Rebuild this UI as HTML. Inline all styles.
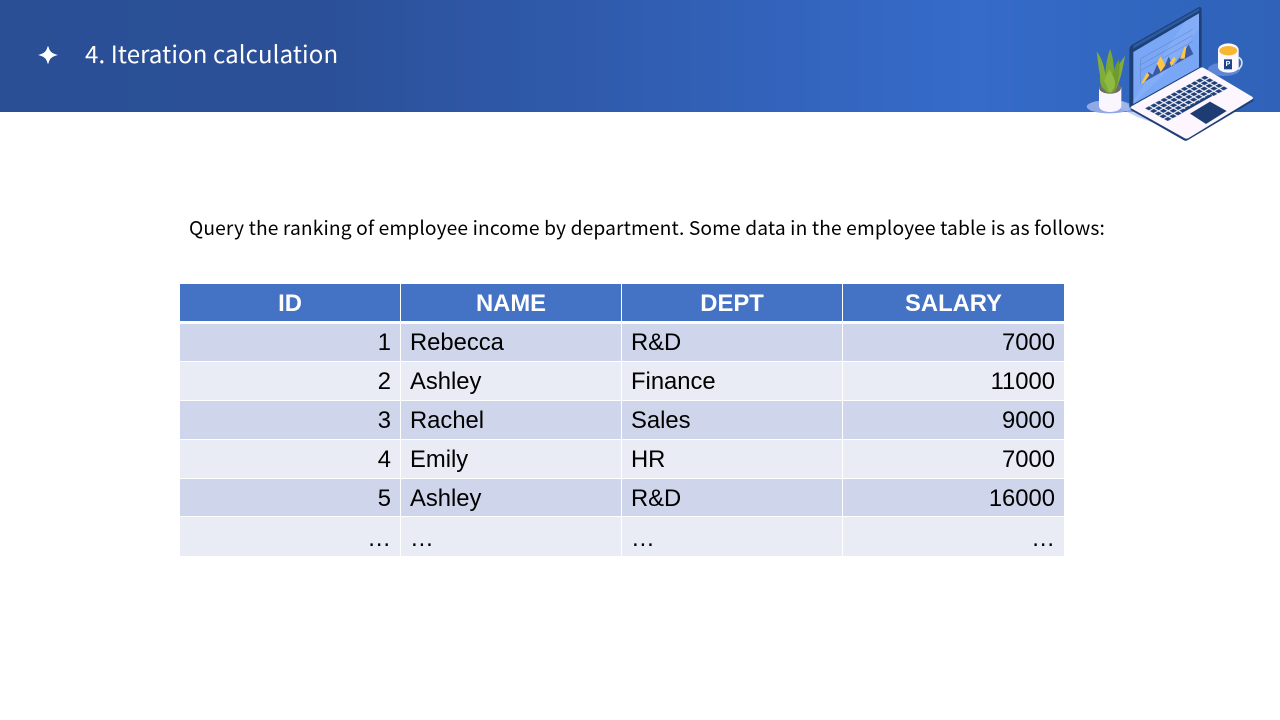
<!DOCTYPE html>
<html><head><meta charset="utf-8"><style>
html,body{margin:0;padding:0;background:#fff}
#p{position:relative;width:1280px;height:720px;overflow:hidden;background:#fff}
#h{position:absolute;left:0;top:0;width:1280px;height:112px;background:linear-gradient(90deg,#2a4f95 0,#2b5098 320px,#366bca 970px,#3268c2 1100px,#2f62b8 1280px)}
.y{font-family:"Noto Sans CJK SC","Liberation Sans",sans-serif;position:absolute;white-space:nowrap}
#t{left:85px;top:35px;font-size:24px;line-height:36px;color:#fff;letter-spacing:.12px}
#q{left:189px;top:213px;font-size:19.2px;line-height:28px;color:#000;letter-spacing:.13px}
.c{position:absolute;font-family:"Liberation Sans",sans-serif;font-size:23.8px;line-height:38px;color:#000;box-sizing:border-box;white-space:nowrap}
.r{position:absolute;left:180px;width:884px}
</style></head><body><div id="p">
<div id="h"></div>
<svg style="position:absolute;left:38px;top:45px" width="20" height="20" viewBox="0 0 20 20"><path d="M10 1.500C11 6 13 8.500 18.500 10C13 11.500 11 14 10 18.500C9 14 7 11.500 1.500 10C7 8.500 9 6 10 1.500Z" fill="#fff" stroke="#fff" stroke-width=".8"/></svg>
<div class="y" id="t">4. Iteration calculation</div>
<div class="y" id="q">Query the ranking of employee income by department. Some data in the employee table is as follows:</div>

<div class="r" style="top:284px;height:37px;background:#4472c4"></div>
<div class="r" style="top:324px;height:37px;background:#cfd5ea"></div>
<div class="r" style="top:362px;height:38px;background:#e9ebf5"></div>
<div class="r" style="top:401px;height:38px;background:#cfd5ea"></div>
<div class="r" style="top:440px;height:38px;background:#e9ebf5"></div>
<div class="r" style="top:479px;height:37px;background:#cfd5ea"></div>
<div class="r" style="top:517px;height:38.500px;background:#e9ebf5"></div>
<div style="position:absolute;left:400px;top:284px;width:1px;height:272px;background:#fff"></div>
<div style="position:absolute;left:621px;top:284px;width:1px;height:272px;background:#fff"></div>
<div style="position:absolute;left:842px;top:284px;width:1px;height:272px;background:#fff"></div>

<div class="c" style="left:180px;width:220px;top:285px;text-align:center;font-weight:bold;color:#fff">ID</div>
<div class="c" style="left:401px;width:220px;top:285px;text-align:center;font-weight:bold;color:#fff">NAME</div>
<div class="c" style="left:622px;width:220px;top:285px;text-align:center;font-weight:bold;color:#fff">DEPT</div>
<div class="c" style="left:843px;width:221px;top:285px;text-align:center;font-weight:bold;color:#fff">SALARY</div>

<div class="c" style="left:180px;width:211px;top:324px;text-align:right">1</div>
<div class="c" style="left:410px;top:324px">Rebecca</div>
<div class="c" style="left:631px;top:324px">R&amp;D</div>
<div class="c" style="left:843px;width:212px;top:324px;text-align:right">7000</div>

<div class="c" style="left:180px;width:211px;top:363px;text-align:right">2</div>
<div class="c" style="left:410px;top:363px">Ashley</div>
<div class="c" style="left:631px;top:363px">Finance</div>
<div class="c" style="left:843px;width:212px;top:363px;text-align:right">11000</div>

<div class="c" style="left:180px;width:211px;top:402px;text-align:right">3</div>
<div class="c" style="left:410px;top:402px">Rachel</div>
<div class="c" style="left:631px;top:402px">Sales</div>
<div class="c" style="left:843px;width:212px;top:402px;text-align:right">9000</div>

<div class="c" style="left:180px;width:211px;top:441px;text-align:right">4</div>
<div class="c" style="left:410px;top:441px">Emily</div>
<div class="c" style="left:631px;top:441px">HR</div>
<div class="c" style="left:843px;width:212px;top:441px;text-align:right">7000</div>

<div class="c" style="left:180px;width:211px;top:480px;text-align:right">5</div>
<div class="c" style="left:410px;top:480px">Ashley</div>
<div class="c" style="left:631px;top:480px">R&amp;D</div>
<div class="c" style="left:843px;width:212px;top:480px;text-align:right">16000</div>

<div class="c" style="left:180px;width:211px;top:520px;text-align:right">…</div>
<div class="c" style="left:410px;top:520px">…</div>
<div class="c" style="left:631px;top:520px">…</div>
<div class="c" style="left:843px;width:212px;top:520px;text-align:right">…</div>

<svg style="position:absolute;left:1070px;top:0" width="200" height="150" viewBox="0 0 600 450">
<defs>
<pattern id="k" patternUnits="userSpaceOnUse" width="100" height="100" patternTransform="matrix(.1525 -.0833 .142 .08 222 325)">
<rect x="12" y="12" width="76" height="76" fill="#1e4078"/>
</pattern>
</defs>
<!-- shadows -->
<ellipse cx="118" cy="320" rx="68" ry="20" fill="#8ea9e6"/>
<ellipse cx="462" cy="208" rx="48" ry="20" fill="#5e86d6"/>
<path d="M150 300L200 330L260 372L200 350L150 325Z" fill="#a9bdec" opacity=".7"/>
<!-- plant pot -->
<path d="M87 262V318C87 330 105 336 120 336C136 336 154 330 154 318V262Z" fill="#fbf6fe"/>
<ellipse cx="120" cy="264" rx="33" ry="17" fill="#6f6a68"/>
<!-- plant -->
<path d="M80 155C100 180 108 215 112 278C92 262 86 205 80 155Z" fill="#82ad3a"/>
<path d="M120 147C132 175 136 225 128 278L108 278C102 225 108 180 120 147Z" fill="#79a635"/>
<path d="M165 168C158 205 152 245 132 278L122 270C132 225 145 190 165 168Z" fill="#82ad3a"/>
<path d="M147 178C150 210 148 250 130 278L118 265C125 225 135 195 147 178Z" fill="#6e9a2e"/>
<path d="M118 208C135 235 145 258 122 278C98 270 90 262 118 208Z" fill="#8fbb43"/>
<path d="M90 228C105 245 115 262 114 276C95 268 88 250 90 228Z" fill="#7ca836"/>
<!-- lid -->
<path d="M178 150Q178 138 190 132L385 22Q395 18 395 30V205L188 330L178 322Z" fill="#1e4078"/>
<path d="M190 136L388 24V32L190 146Z" fill="#2d5a9c"/>
<path d="M190 156L387 40V202L190 312Z" fill="#79a6f5"/>
<path d="M345 64L387 40V86L305 200L190 312V302Z" fill="#8ab3f7" opacity=".6"/>
<!-- chart lines -->
<g stroke="#5e7fc4" stroke-width="1.500" fill="none">
<path d="M212 176L368 88"/><path d="M212 194L368 106"/><path d="M212 212L368 124"/>
<path d="M212 176V252"/>
</g>
<!-- chart peaks -->
<path d="M212 252L234 216L248 224L272 168L285 196L296 170L310 198L330 172L356 134L370 162Z" fill="#3b5aa3"/>
<path d="M212 252L232 216L238 226L222 248Z" fill="#fdc644"/>
<path d="M260 190L272 168L286 196L272 216Z" fill="#fdc644"/>
<path d="M299 188L312 170L318 178L304 200Z" fill="#fdc644"/>
<path d="M330 176L344 140L349 140L344 176Z" fill="#fdc644"/>
<!-- base -->
<path d="M182 330L342 421Q348 424 354 420L548 304Q553 300 548 296L400 208L186 322Z" fill="#1e4078"/>
<path d="M182 324L345 415Q350 417 356 414L546 298Q552 294 546 290L400 203Q396 201 390 204L186 318Q180 321 182 324Z" fill="#fdf6fe"/>
<!-- keys -->
<path d="M222 325L405 225L475 265L430 290L424 282L335 333L340 340L293 365Z" fill="url(#k)"/>
<path d="M335 336L425 285" stroke="#1e4078" stroke-width="7" fill="none"/>
<!-- trackpad -->
<path d="M360 341L420 305L470 333L408 372Z" fill="#1e3c74"/>
<!-- mug -->
<path d="M506 172C520 180 518 200 504 208" stroke="#dcdfe8" stroke-width="5" fill="none"/>
<path d="M444 150V200C444 212 460 218 475 218C492 218 506 212 506 200V150Z" fill="#fdf8fe"/>
<ellipse cx="475" cy="150" rx="31" ry="20" fill="#fdf8fe"/>
<ellipse cx="475" cy="152" rx="27" ry="14" fill="#f7b733"/>
<rect x="462" y="178" width="24" height="30" fill="#1d4488"/>
<text x="474" y="198" text-anchor="middle" font-family="Liberation Sans,sans-serif" font-weight="bold" font-size="21" fill="#fff">P</text>
</svg>
</div></body></html>
